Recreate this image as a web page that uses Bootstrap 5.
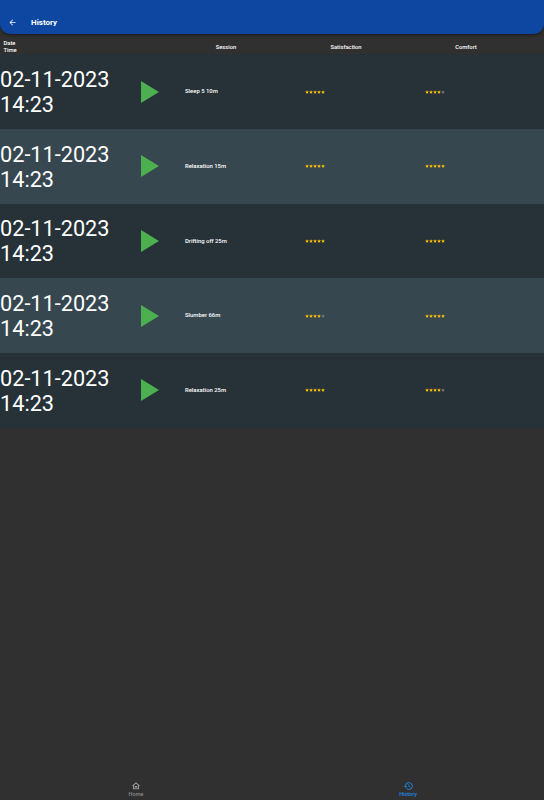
<!DOCTYPE html>
<html lang="en">
<head>
    <meta charset="UTF-8">
    <meta name="viewport" content="width=device-width, initial-scale=1.0">
    <title>History</title>
    <link href="https://cdn.jsdelivr.net/npm/bootstrap@5.3.0/dist/css/bootstrap.min.css" rel="stylesheet">
    <script src="https://cdn.jsdelivr.net/npm/bootstrap@5.3.0/dist/js/bootstrap.bundle.min.js"></script>
    <style>
        body {
            background-color: #303030;
            color: #fff;
            font-family: Roboto, "Liberation Sans", sans-serif;
            height: 800px;
            overflow: hidden;
        }
        .app-bar {
            height: 34px;
            flex: none;
            background-color: #0d47a1;
            border-radius: 0 0 10px 10px;
            box-shadow: 0 1px 3px rgba(0,0,0,0.5);
            padding: 11px 0 0 8px;
        }
        .app-title {
            font-size: 8px;
            font-weight: 700;
            margin-left: 14px;
        }
        .hist-head {
            height: 20.3px;
            flex: none;
            padding-top: 6.6px;
            font-size: 5.8px;
            font-weight: 500;
            line-height: 7px;
        }
        .date-col { width: 133px; flex: none; }
        .play-col { width: 33px; flex: none; }
        .data-col { width: 120px; flex: none; }
        .hist-head .date-col { padding-left: 3.5px; }
        .hist-row {
            height: 74.67px;
            background-color: #263238;
        }
        .hist-row.alt { background-color: #37474f; }
        .hist-row .date-col {
            font-size: 21.7px;
            line-height: 25px;
            white-space: nowrap;
            padding-top: 1px;
        }
        .hist-row .data-col {
            padding-left: 19px;
            font-size: 5.9px;
            font-weight: 500;
        }
        .play-icon { display: block; margin-left: 8px; }
        .star-icon { display: block; width: 4.1px; height: 4.1px; flex: none; }
        .star-on { fill: #ffc107; }
        .star-off { fill: #6f7a80; }
        .bottom-nav { height: 34px; flex: none; }
        .nav-slot {
            width: 50%;
            font-size: 5.5px;
            font-weight: 500;
            line-height: 7px;
            color: #8c8c8c;
            padding-top: 14.5px;
        }
        .nav-slot.active { color: #1e88e5; }
        .nav-slot svg { display: block; }
    </style>
</head>
<body class="d-flex flex-column">
    <svg width="0" height="0" class="position-absolute">
        <symbol id="star" viewBox="0 0 24 24"><path d="M12 1l3.300 7.200 7.700.8-5.800 5.200 1.700 7.700L12 18l-6.900 3.900 1.700-7.700L1 9l7.700-.8z"/></symbol>
    </svg>

    <header class="app-bar d-flex align-items-center">
        <svg width="9" height="9" viewBox="0 0 24 24" fill="#fff"><path d="M20 11H7.800l5.600-5.600L12 4l-8 8 8 8 1.400-1.400L7.800 13H20z"/></svg>
        <span class="app-title">History</span>
    </header>

    <div class="hist-head d-flex align-items-center">
        <div class="date-col">Date<br>Time</div>
        <div class="play-col"></div>
        <div class="data-col text-center">Session</div>
        <div class="data-col text-center">Satisfaction</div>
        <div class="data-col text-center">Comfort</div>
    </div>

    <div id="rows"></div>

    <nav class="bottom-nav d-flex mt-auto">
        <div class="nav-slot d-flex flex-column align-items-center">
            <svg width="10" height="10" viewBox="0 0 24 24" fill="#a8a8a8"><path d="M12 5.700l5 4.500V18h-2v-6H9v6H7v-7.800l5-4.500M12 3 2 12h3v8h6v-6h2v6h6v-8h3z"/></svg>
            <span>Home</span>
        </div>
        <div class="nav-slot active d-flex flex-column align-items-center">
            <svg width="11" height="10" viewBox="0 0 24 24" fill="#1e88e5"><path d="M13 3a9 9 0 0 0-9 9H1l3.900 3.900L9 12H6a7 7 0 1 1 2.100 4.900l-1.400 1.400A9 9 0 1 0 13 3zm-1 5v5l4.300 2.500.7-1.200-3.500-2.100V8z"/></svg>
            <span>History</span>
        </div>
    </nav>

    <script>
        const rows = [
            ['Sleep 5 10m', 5, 4],
            ['Relaxation 15m', 5, 5],
            ['Drifting off 25m', 5, 5],
            ['Slumber 66m', 4, 5],
            ['Relaxation 25m', 5, 4]
        ];

        function stars(n) {
            let out = '';
            for (let i = 0; i < 5; i++) {
                out += `<svg class="star-icon ${i < n ? 'star-on' : 'star-off'}"><use href="#star"/></svg>`;
            }
            return `<div class="d-flex">${out}</div>`;
        }

        document.getElementById('rows').innerHTML = rows.map((r, i) => `
            <div class="hist-row ${i % 2 ? 'alt' : ''} d-flex align-items-center">
                <div class="date-col">02-11-2023<br>14:23</div>
                <div class="play-col">
                    <svg class="play-icon" width="18" height="22" viewBox="0 0 18 22"><path d="M0 0L18 11 0 22z" fill="#4caf50"/></svg>
                </div>
                <div class="data-col">${r[0]}</div>
                <div class="data-col">${stars(r[1])}</div>
                <div class="data-col">${stars(r[2])}</div>
            </div>`).join('');
    </script>
</body>
</html>
